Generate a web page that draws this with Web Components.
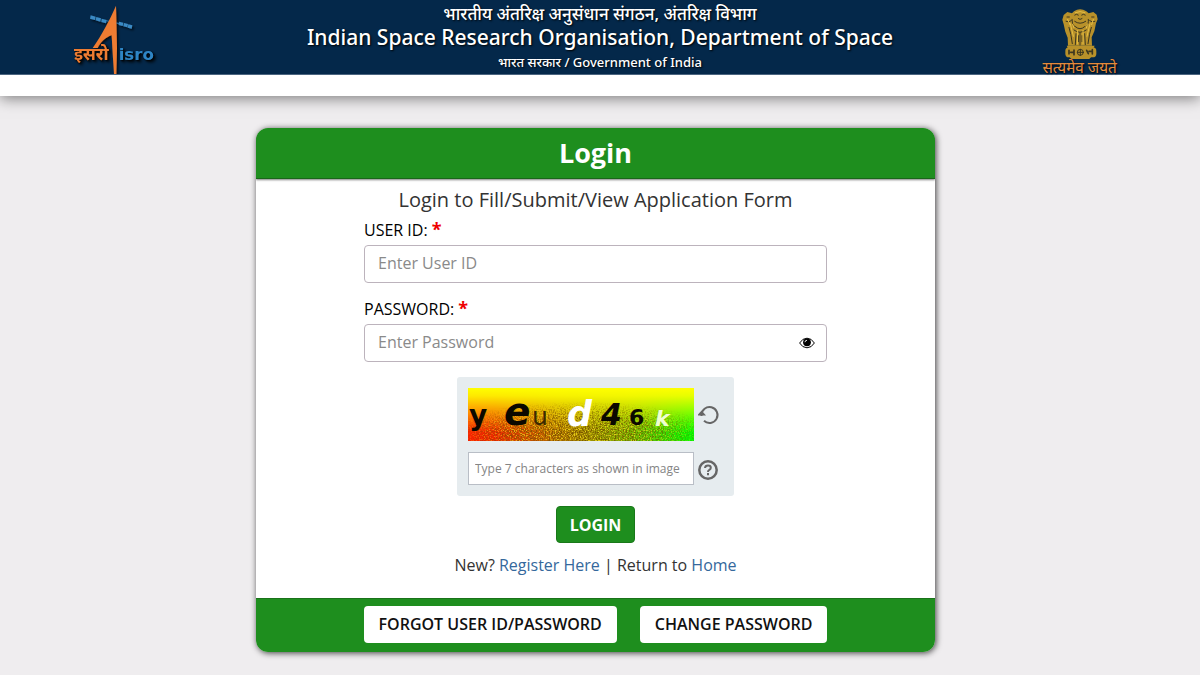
<!DOCTYPE html>
<html lang="en">
<head>
<meta charset="utf-8">
<meta name="viewport" content="width=device-width, initial-scale=1">
<title>ISRO Login</title>
<style>
  html { height: 100%; }
  body { margin: 0; min-height: 100%; background: #efedef; font-family: "Open Sans", "Noto Sans", sans-serif; font-size: 16px; color: #333; }
</style>
</head>
<body>
<site-header></site-header>
<login-page></login-page>
<script>
const define = (name, html, init) => {
  const t = document.createElement('template');
  t.innerHTML = html;
  customElements.define(name, class extends HTMLElement {
    constructor() {
      super();
      this.attachShadow({ mode: 'open' }).append(t.content.cloneNode(true));
    }
    connectedCallback() { if (init) init(this, this.shadowRoot); }
  });
};

define('isro-logo', `
<style>:host{display:block;width:110px;height:74px} svg{display:block}</style>
<svg width="110" height="74" viewBox="0 0 330 222" role="img" aria-label="ISRO">
  <defs><filter id="s" x="-20%" y="-20%" width="140%" height="140%"><feDropShadow dx="5" dy="5" stdDeviation="3" flood-color="#000" flood-opacity=".7"/></filter></defs>
  <g filter="url(#s)">
    <g fill="#3a8ac4">
      <path d="M92 46l15 4-2 10-15-4zM109 51l14 4-2 10-14-4zM125 56l15 4-2 10-14-4zM177 65l13 3-2 10-12-3zM192 69l12 3-2 10-12-3zM205 73l12 3-2 10-12-3z"/>
      <path d="M139 62l38 9" stroke="#3a8ac4" stroke-width="2"/>
    </g>
    <path fill="#ee7b30" d="M168 17C151 56 124 108 98 144L113 144C122 127 137 111 155 106L157 145 162 222 169 222 171 145Z"/>
    <text x="42" y="179" font-family="Noto Sans, sans-serif" font-size="52" font-weight="700" fill="#ee7b30">इसरो</text>
    <text x="176" y="179" font-family="DejaVu Sans, sans-serif" font-size="50" font-weight="700" fill="#2f85c5">isro</text>
  </g>
</svg>`);

define('state-emblem', `
<style>:host{display:block;width:100px;height:74px} svg{display:block;overflow:visible}</style>
<svg width="100" height="74" viewBox="0 0 300 222" role="img" aria-label="State Emblem of India">
  <g fill="#b8912a">
    <path d="M132 34q18-12 37 0l7 6 14-4 10 8 3 14-5 12-5 24-8 18 1 25h-72l-1-24-7-18-5-22-4-14 4-14 11-9 14 4z"/>
    <path d="M110 137h84l-4 8h-76z"/>
    <rect x="106" y="142" width="93" height="30" rx="11"/>
    <path d="M118 170h66l-6 7h-54z"/>
  </g>
  <g fill="none" stroke="#3c3720" stroke-width="3" stroke-linecap="round">
    <path d="M134 45q5-5 11 0M155 45q5-5 11 0M145 56q5 5 11 0M134 64q16 12 33 0M111 51h7M185 51h7M108 64q9 5 16-2M179 62q7 7 16 2"/>
    <path d="M126 58q-1 15 7 21M175 58q2 15-7 21M136 80q14 13 28 0M132 90q17 14 37 0M117 82q6 18 10 49M184 82q-6 18-10 49M138 101l-2 33M164 101l2 33M150 98v37M145 107v18M156 107v18"/>
    <circle cx="151" cy="157" r="9"/><path d="M151 148v18M142 157h18"/>
    <path stroke-width="5" d="M117 151v11M122 157h9M132 150v14M170 151l5 10M177 154h10M187 149v13"/>
  </g>
  <g fill="none" stroke="#e6bf45" stroke-width="3" stroke-linecap="round">
    <path d="M136 38q14-7 29 0M121 71l9 38M180 71l-9 38M143 91l-1 41M159 91v41M113 58l7 16M190 58l-5 16M128 73l4 10M172 72l-3 12"/>
  </g>
  <text x="149" y="220" text-anchor="middle" font-family="Noto Sans, sans-serif" font-size="46" fill="#e58b3c">सत्यमेव जयते</text>
</svg>`);

define('site-header', `
<style>
  :host{display:block;background:#fff;padding-bottom:21px;box-shadow:0 2px 14px rgba(0,0,0,.5)}
  .bar{display:grid;grid-template-columns:1fr auto 1fr;background:#04284a;border-bottom:1px solid #4b6580;color:#fff;text-align:center;text-shadow:1px 1px 2px #000}
  isro-logo{margin-left:60px}
  state-emblem{justify-self:end;margin-right:70px}
  .t{font-family:"Noto Sans",sans-serif;display:flex;flex-direction:column;padding-top:3px}
  p,h1{margin:0;white-space:nowrap}
  .hi{font-size:17px;line-height:22px;font-weight:500}
  h1{font-size:21px;line-height:25px;font-weight:500}
  .go{font-size:13px;line-height:24px;font-weight:500}
</style>
<header class="bar">
  <isro-logo></isro-logo>
  <div class="t">
    <p class="hi" lang="hi">भारतीय अंतरिक्ष अनुसंधान संगठन, अंतरिक्ष विभाग</p>
    <h1>Indian Space Research Organisation, Department of Space</h1>
    <p class="go">भारत सरकार / Government of India</p>
  </div>
  <state-emblem></state-emblem>
</header>`);

define('login-field', `
<style>
  :host{display:block}
  label{display:flex;font-size:16px;line-height:21px;color:#000;gap:4px}
  .star{color:#e00;font-size:18px;line-height:18px;font-weight:700}
  .box{position:relative;display:flex;margin-top:4px}
  input{flex:1;min-width:0;height:38px;box-sizing:border-box;border:1px solid #bcb3bc;border-radius:4px;background:#fff;padding:0 14px 2px 13px;font:16px "Open Sans",sans-serif;color:#333}
  input::placeholder{color:#8a8a8a;opacity:1}
  button{position:absolute;right:12px;top:11px;border:0;padding:0;background:none;width:16px;height:16px}
  button[hidden]{display:none}
  svg{display:block}
</style>
<label for="i"><span class="n"></span><span class="star">*</span></label>
<div class="box"><input id="i"><button type="button" aria-label="Show password" hidden>
  <svg width="16" height="16" viewBox="0 0 16 16"><path fill="none" stroke="#000" d="M.6 8Q3.500 3.200 8 3.200T15.400 8Q12.500 12.800 8 12.800T.6 8Z"/><circle cx="8" cy="7.300" r="3.900"/><path d="M6 7.200Q6 5.300 8 5.300" fill="none" stroke="#fff" stroke-width=".9"/></svg>
</button></div>`, (el, r) => {
  const input = r.querySelector('input');
  const eye = r.querySelector('button');
  r.querySelector('.n').textContent = el.getAttribute('label');
  input.placeholder = el.getAttribute('placeholder');
  input.type = el.getAttribute('type') || 'text';
  if (input.type === 'password') {
    eye.hidden = false;
    eye.onclick = () => { input.type = input.type === 'password' ? 'text' : 'password'; };
  }
});

define('captcha-box', `
<style>
  :host{display:grid;grid-template-columns:226px 20px;column-gap:4px;row-gap:11px;align-items:center;background:#e6ecef;border-radius:3px;padding:11px 16px 11px 11px}
  svg{display:block}
  button{border:0;background:none;padding:0;width:22px;height:22px}
  input{width:100%;height:33px;box-sizing:border-box;border:1px solid #b9bec6;padding:0 6px;font:12px "Open Sans",sans-serif;background:#fff;color:#333}
  input::placeholder{color:#858585;opacity:1}
</style>
<svg width="226" height="53" viewBox="0 0 226 53" font-family="DejaVu Sans, sans-serif">
  <defs>
    <linearGradient id="h"><stop offset="0" stop-color="#f20"/><stop offset=".12" stop-color="#f02800"/><stop offset=".4" stop-color="#b87400"/><stop offset=".7" stop-color="#7bb000"/><stop offset="1" stop-color="#0f0"/></linearGradient>
    <linearGradient id="v" x2="0" y2="1"><stop offset="0" stop-color="#ff0"/><stop offset=".15" stop-color="#ff0" stop-opacity=".9"/><stop offset=".85" stop-color="#ff0" stop-opacity="0"/></linearGradient>
    <filter id="n" x="0" y="0" width="100%" height="100%" color-interpolation-filters="sRGB"><feTurbulence type="fractalNoise" baseFrequency=".7" numOctaves="2" seed="4"/><feColorMatrix values="0 0 0 0 .45  0 0 0 0 .3  0 0 0 0 0  5 0 0 0 -2.200"/></filter>
    <filter id="y" x="0" y="0" width="100%" height="100%" color-interpolation-filters="sRGB"><feTurbulence type="fractalNoise" baseFrequency=".8" numOctaves="2" seed="9"/><feColorMatrix values="0 0 0 0 .95  0 0 0 0 .85  0 0 0 0 .1  0 6 0 0 -3.200"/></filter>
    <radialGradient id="m" cx=".5" cy=".85" r=".6"><stop offset="0" stop-color="#ddd"/><stop offset=".5" stop-color="#aaa"/><stop offset="1" stop-color="#000"/></radialGradient>
    <mask id="k"><rect width="226" height="53" fill="url(#m)"/></mask>
  </defs>
  <rect width="226" height="53" fill="url(#h)"/><rect width="226" height="53" fill="url(#v)"/>
  <g mask="url(#k)"><rect width="226" height="53" filter="url(#n)"/><rect width="226" height="53" filter="url(#y)"/></g>
  <g fill="#0b0800">
    <text x="1" y="37" font-size="28" font-weight="700">y</text>
    <text x="36" y="37" font-size="39" font-weight="700" font-style="italic">e</text>
    <text x="64" y="37" font-size="25" fill="#3c2a00">u</text>
    <text x="99" y="38" font-size="35" font-weight="700" font-style="italic" fill="#fff">d</text>
    <text x="133" y="37" font-size="30" font-weight="700" font-style="italic">4</text>
    <text x="161" y="37" font-size="22" font-weight="700">6</text>
    <text x="187" y="38" font-size="22" font-weight="700" font-style="italic" fill="#efffd0">k</text>
  </g>
</svg>
<button type="button" aria-label="New image"><svg width="22" height="22" viewBox="0 0 22 22" fill="none" stroke="#666" stroke-width="2"><path d="M3.500 12V11A8 8 0 1 1 6 16.800"/><path d="M-1 11.500L3.600 6.500 8 11.500Z" fill="#666" stroke="none"/></svg></button>
<input aria-label="Captcha" placeholder="Type 7 characters as shown in image">
<button type="button" aria-label="Help"><svg width="20" height="22" viewBox="0 0 20 22" fill="none" stroke="#666" stroke-width="2.500"><circle cx="10" cy="12" r="8.700"/><path d="M7 10Q7.200 7.500 10 7.500T12.800 9.700Q12.800 11 11.300 11.900 10 12.500 10 14M10 15V17.300" stroke-width="2"/></svg></button>`);

define('login-page', `
<style>
  :host{display:block;padding:32px 17px 24px 8px}
  .card{max-width:679px;margin:0 auto;border-radius:12px;overflow:hidden;background:#fff;box-shadow:1px 1px 6px rgba(0,0,0,.75)}
  h2{margin:0;background:#1e8e1e;color:#fff;font-size:27px;line-height:50px;font-weight:700;text-align:center;border-bottom:1px solid #1a661a;box-shadow:0 1px 2px rgba(0,0,0,.5)}
  form{display:flex;flex-direction:column;align-items:center;padding:6px 108px 11px}
  h3{margin:0 0 5px;font-size:20px;line-height:30px;font-weight:400;white-space:nowrap}
  login-field{width:100%;margin-bottom:15px}
  login-field + login-field{margin-top:1px}
  .go{margin-top:10px;height:37px;padding:0 13px;background:#1e8e1e;color:#fff;border:1px solid #197819;border-radius:4px;font:700 16px "Open Sans",sans-serif}
  p{margin:10px 0;line-height:24px;white-space:nowrap}
  a{color:#35689c;text-decoration:none}
  footer{display:flex;justify-content:center;gap:23px;background:#1e8e1e;border-top:1px solid #1a721a;padding:7px 8px 9px}
  footer button{height:37px;border:0;border-radius:4px;background:#fff;color:#111;padding:0 15px 2px;font:600 16px "Open Sans",sans-serif}
</style>
<main class="card">
  <h2>Login</h2>
  <form onsubmit="return false">
    <h3>Login to Fill/Submit/View Application Form</h3>
    <login-field label="USER ID:" placeholder="Enter User ID"></login-field>
    <login-field label="PASSWORD:" type="password" placeholder="Enter Password"></login-field>
    <captcha-box></captcha-box>
    <button class="go">LOGIN</button>
    <p>New? <a href="#register">Register Here</a> | Return to <a href="#home">Home</a></p>
  </form>
  <footer><button type="button">FORGOT USER ID/PASSWORD</button><button type="button">CHANGE PASSWORD</button></footer>
</main>`);
</script>
</body>
</html>
